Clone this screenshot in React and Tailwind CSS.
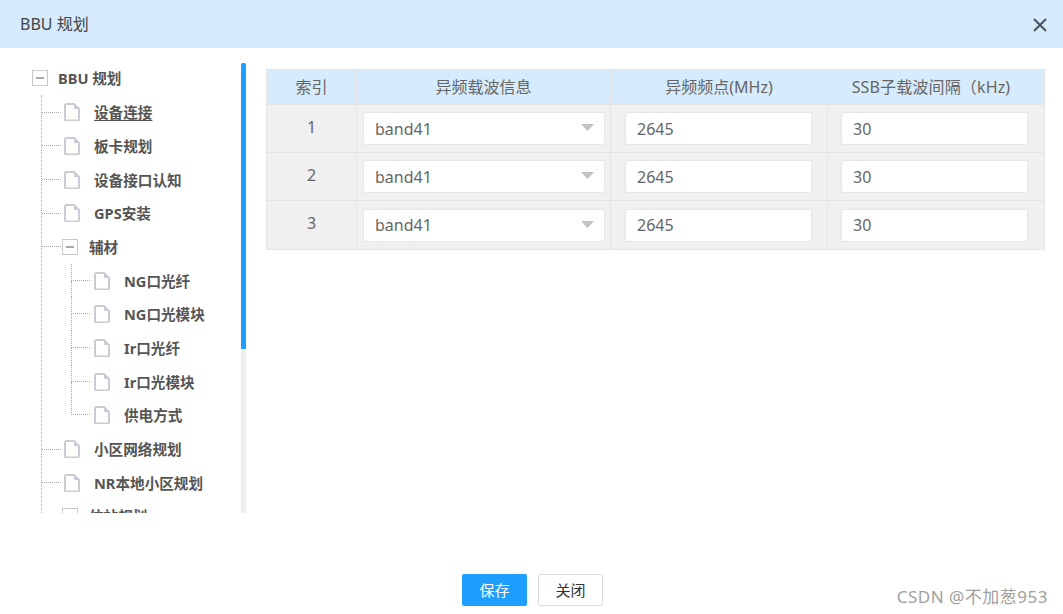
const FONT = "font-['Noto_Sans','Noto_Sans_CJK_SC',sans-serif]"

const ROWS = [1, 2, 3]

function FileIcon() {
  return (
    <svg width="16" height="18" viewBox="0 0 16 18" fill="none" className="shrink-0">
      <path d="M2.500 1h7.500l5 5v10a1.500 1.500 0 0 1-1.500 1.500h-11A1.500 1.500 0 0 1 1 16V2.500A1.500 1.500 0 0 1 2.500 1z" stroke="#c9ccd5" strokeWidth="2" fill="#fff" />
      <path d="M10 1v5h5z" fill="#c9ccd5" />
    </svg>
  )
}

function MinusBox() {
  return (
    <span className="flex h-[16px] w-[16px] shrink-0 items-center justify-center border border-[#c4c8d0] bg-white">
      <span className="h-[2px] w-[8px] bg-[#a9a9a9]" />
    </span>
  )
}

function Label({ children, underline }) {
  return (
    <span className={`whitespace-nowrap text-[14.6px] font-bold text-[#555] ${underline ? 'underline underline-offset-2' : ''}`}>
      {children}
    </span>
  )
}

function FileRow({ label, underline }) {
  return (
    <div className="flex h-[33.7px] items-center">
      <span className="w-[19px] shrink-0 border-t border-dotted border-[#aaa]" />
      <span className="ml-[3px]"><FileIcon /></span>
      <span className="ml-[14px]"><Label underline={underline}>{label}</Label></span>
    </div>
  )
}

function NestedRow({ label, last }) {
  return (
    <div className="flex h-[33.7px] items-center">
      <div className="flex h-full w-[19px] shrink-0 flex-col">
        <span className="h-1/2 border-b border-l border-dotted border-[#aaa]" />
        <span className={`h-1/2 ${last ? '' : 'border-l border-dotted border-[#aaa]'}`} />
      </div>
      <span className="ml-[4px]"><FileIcon /></span>
      <span className="ml-[14px]"><Label>{label}</Label></span>
    </div>
  )
}

function Tree() {
  return (
    <div className="h-[450px] w-[241px] overflow-hidden">
      <div className="flex h-[30px] items-center pl-[32px]">
        <MinusBox />
        <span className="ml-[10px]"><Label>BBU 规划</Label></span>
      </div>
      <div className="ml-[41px] mt-[2.3px] border-l border-dotted border-[#aaa]">
        <FileRow label="设备连接" underline />
        <FileRow label="板卡规划" />
        <FileRow label="设备接口认知" />
        <FileRow label="GPS安装" />
        <div className="flex h-[33.7px] items-center">
          <span className="w-[19px] shrink-0 border-t border-dotted border-[#aaa]" />
          <span className="ml-[1px]"><MinusBox /></span>
          <span className="ml-[11px]"><Label>辅材</Label></span>
        </div>
        <div className="ml-[29px]">
          <NestedRow label="NG口光纤" />
          <NestedRow label="NG口光模块" />
          <NestedRow label="Ir口光纤" />
          <NestedRow label="Ir口光模块" />
          <NestedRow label="供电方式" last />
        </div>
        <FileRow label="小区网络规划" />
        <FileRow label="NR本地小区规划" />
        <div className="flex h-[33.7px] items-center">
          <span className="w-[19px] shrink-0 border-t border-dotted border-[#aaa]" />
          <span className="ml-[1px]"><MinusBox /></span>
          <span className="ml-[11px]"><Label>仿站规划</Label></span>
        </div>
      </div>
    </div>
  )
}

function Field({ value, caret }) {
  return (
    <div className="flex h-[33px] items-center justify-between rounded-[2px] border border-[#e6e6e6] bg-white pl-[11px] pr-[10px] text-[16px] text-[#666]">
      <span>{value}</span>
      {caret && (
        <svg width="13" height="7" viewBox="0 0 13 7" className="-mt-[2px]">
          <path d="M0 0h13L6.500 7z" fill="#c2c2c2" />
        </svg>
      )}
    </div>
  )
}

export default function App() {
  return (
    <div className={`relative h-[614px] w-[1063px] overflow-hidden bg-white ${FONT}`}>
      <div className="flex h-[48px] items-center justify-between bg-[#d6ebfb] pb-[1px] pl-[20px] pr-[15px]">
        <span className="text-[16px] text-[#444]">BBU 规划</span>
        <svg width="16" height="16" viewBox="0 0 16 16" className="mt-[3px]">
          <path d="M2 2l12 12M14 2L2 14" stroke="#4a5160" strokeWidth="2" />
        </svg>
      </div>

      <div className="flex h-[465px]">
        <div className="mt-[15px] flex h-[450px]">
          <Tree />
          <div className="h-[450px] w-[5px] bg-[#eeeeee]">
            <div className="h-[286px] rounded-t-[2px] bg-[#1e9fff]" />
          </div>
        </div>

        <div className="ml-[20px] mt-[21px] w-[778px]">
          <table className="w-full table-fixed border-collapse text-[16px] text-[#666]">
            <colgroup>
              <col className="w-[90px]" />
              <col className="w-[254px]" />
              <col className="w-[217px]" />
              <col className="w-[217px]" />
            </colgroup>
            <thead>
              <tr className="h-[35px] bg-[#d6ebfb]">
                <th className="border border-[#e4e4e4] font-normal">索引</th>
                <th className="border border-[#e4e4e4] font-normal">异频载波信息</th>
                <th className="border border-[#e4e4e4] font-normal">异频频点(MHz)</th>
                <th className="whitespace-nowrap border border-[#e4e4e4] pr-[10px] font-normal tracking-[0.15px]">SSB子载波间隔（kHz)</th>
              </tr>
            </thead>
            <tbody>
              {ROWS.map((n) => (
                <tr key={n} className={`bg-[#f0f0f0] ${n === 3 ? 'h-[49px]' : 'h-[48px]'}`}>
                  <td className="border border-[#e4e4e4] pb-[4px] text-center">{n}</td>
                  <td className="border border-[#e4e4e4] pl-[6px] pr-[5px]"><Field value="band41" caret /></td>
                  <td className="border border-[#e4e4e4] pl-[14px] pr-[15px]"><Field value="2645" /></td>
                  <td className="border border-[#e4e4e4] pl-[13px] pr-[16px]"><Field value="30" /></td>
                </tr>
              ))}
            </tbody>
          </table>
        </div>
      </div>

      <div className="mt-[61px] flex justify-center gap-[11px] pl-[2px]">
        <button className="h-[32px] w-[65px] rounded-[2px] bg-[#1e9fff] text-[15px] text-white">保存</button>
        <button className="h-[32px] w-[65px] rounded-[2px] border border-[#dcdcdc] bg-white text-[15px] text-[#333]">关闭</button>
      </div>

      <span className="absolute bottom-[5px] right-[15px] text-[17px] tracking-[0.5px] text-[#a0a0a0]">CSDN @不加葱953</span>
    </div>
  )
}
